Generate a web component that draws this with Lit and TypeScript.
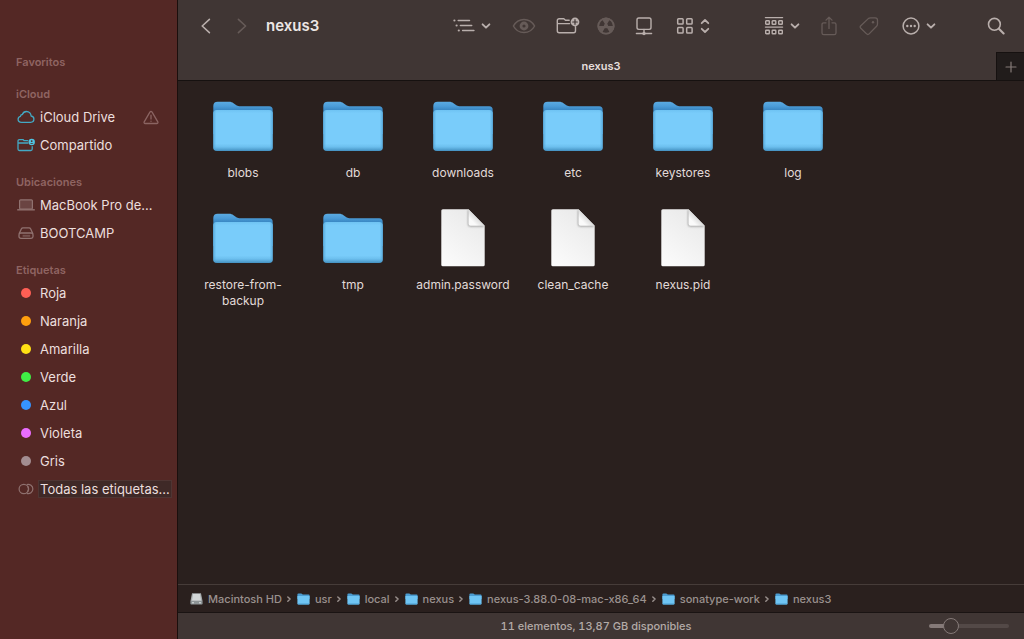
import { LitElement, html, css, nothing } from "lit";
import { customElement, property, state } from "lit/decorators.js";
import { styleMap } from "lit/directives/style-map.js";

const FONT = css`Inter, "Noto Sans", "Liberation Sans", sans-serif`;

const resetButton = css`
  button {
    appearance: none;
    border: 0;
    margin: 0;
    padding: 0;
    background: none;
    color: inherit;
    font: inherit;
  }
`;

/* ---------- glyphs ---------- */

const chevronDown = html`<svg class="glyph" width="10" height="8" viewBox="0 0 10 8" aria-hidden="true">
  <path d="M1.6 2.3 5 5.7l3.4-3.4" stroke-width="1.9" />
</svg>`;

const glyphs = {
  back: html`<svg class="glyph" width="12" height="18" viewBox="0 0 12 18"><path d="M9.4 2.4 2.2 9l7.2 6.6" stroke-width="1.6" /></svg>`,
  forward: html`<svg class="glyph" width="12" height="18" viewBox="0 0 12 18"><path d="M2.4 2.4 9.6 9l-7.2 6.6" stroke-width="1.6" /></svg>`,
  list: html`<svg class="glyph" width="22" height="16" viewBox="0 0 22 16">
    <path d="M5.2 2.5h11.3M7.4 7.5h11.3M9.6 12.500h11.3" stroke-width="1.5" />
    <g class="solid"><circle cx="1.4" cy="2.5" r="1.100" /><circle cx="3.6" cy="7.5" r="1.100" /><circle cx="5.8" cy="12.500" r="1.100" /></g>
  </svg>`,
  eye: html`<svg class="glyph" width="24" height="18" viewBox="0 0 24 18">
    <path d="M1.4 9C3.6 5 7.4 2.4 12 2.4S20.4 5 22.6 9C20.4 13 16.6 15.6 12 15.6S3.6 13 1.4 9Z" stroke-width="1.5" />
    <circle cx="12" cy="9" r="3" stroke-width="2.8" />
  </svg>`,
  newFolder: html`<svg class="glyph" width="24" height="20" viewBox="0 0 24 20">
    <path d="M13.2 4.3H9.5L7.8 2.7H3.2C2 2.7 1.3 3.4 1.3 4.6V14.8C1.3 16 2 16.8 3.2 16.8H17.6C18.8 16.8 19.5 16 19.5 14.8V10.6M1.3 7.6H13.6" stroke-width="1.4" />
    <circle class="solid" cx="19" cy="6" r="4.400" />
    <path class="cut" d="M19 3.7v4.6M16.7 6h4.6" stroke-width="1.2" />
  </svg>`,
  burn: html`<svg class="glyph" width="18" height="18" viewBox="0 0 18 18">
    <circle class="solid" cx="9" cy="9" r="8.6" />
    <g class="cutfill">
      <path d="M7.9 7.1 4.9 1.9A8.2 8.2 0 0 1 13.1 1.9L10.1 7.1A2.2 2.2 0 0 0 7.9 7.1Z" transform="rotate(60 9 9)" />
      <path d="M7.9 7.1 4.9 1.9A8.2 8.2 0 0 1 13.1 1.9L10.1 7.1A2.2 2.2 0 0 0 7.9 7.1Z" transform="rotate(180 9 9)" />
      <path d="M7.9 7.1 4.9 1.9A8.2 8.2 0 0 1 13.1 1.9L10.1 7.1A2.2 2.2 0 0 0 7.9 7.1Z" transform="rotate(300 9 9)" />
    </g>
    <circle class="solid" cx="9" cy="9" r="1.4" />
    <circle cx="9" cy="9" r="7.7" stroke-width="1.7" />
  </svg>`,
  network: html`<svg class="glyph" width="18" height="20" viewBox="0 0 18 20">
    <rect x="2" y="2" width="14" height="11.4" rx="1.8" stroke-width="1.4" />
    <path d="M9 13.4v3.2M1.4 17.5h15.2" stroke-width="1.4" />
    <circle class="solid" cx="9" cy="17.5" r="1.7" />
  </svg>`,
  grid: html`<svg class="glyph" width="18" height="18" viewBox="0 0 18 18">
    <g stroke-width="1.5">
      <rect x="1.7" y="1.7" width="5.4" height="5.4" rx="0.8" /><rect x="10.7" y="1.7" width="5.4" height="5.4" rx="0.8" />
      <rect x="1.7" y="10.6" width="5.4" height="5.4" rx="0.8" /><rect x="10.7" y="10.6" width="5.4" height="5.4" rx="0.8" />
    </g>
  </svg>`,
  upDown: html`<svg class="glyph" width="10" height="16" viewBox="0 0 10 16"><path d="M1.7 5.2 5 2l3.3 3.2M1.7 10.8 5 14l3.3-3.2" stroke-width="1.8" /></svg>`,
  group: html`<svg class="glyph" width="20" height="20" viewBox="0 0 20 20">
    <path d="M1.4 1.6h17.2M1.4 11.1h17.2" stroke-width="1.3" />
    <g stroke-width="1.4">
      <rect x="1.7" y="4.7" width="3.6" height="3.6" rx="0.6" /><rect x="8.2" y="4.7" width="3.6" height="3.6" rx="0.6" /><rect x="14.7" y="4.7" width="3.6" height="3.6" rx="0.6" />
      <rect x="1.7" y="14.2" width="3.6" height="3.6" rx="0.6" /><rect x="8.2" y="14.2" width="3.6" height="3.6" rx="0.6" /><rect x="14.7" y="14.2" width="3.6" height="3.6" rx="0.6" />
    </g>
  </svg>`,
  share: html`<svg class="glyph" width="16" height="20" viewBox="0 0 16 20">
    <path d="M5 6.8H2.8C1.7 6.8 1 7.5 1 8.6V16.9C1 18 1.7 18.7 2.8 18.7H13.2C14.3 18.7 15 18 15 16.9V8.6C15 7.5 14.3 6.8 13.2 6.8H11M8 12.4V1.3M5 4.1 8 1.2l3 2.9" stroke-width="1.3" />
  </svg>`,
  tag: html`<svg class="glyph" width="20" height="20" viewBox="0 0 20 20">
    <path d="M11.6 1.8H16.2C17.7 1.8 18.5 2.6 18.5 4.1V8C18.5 9 18.2 9.7 17.6 10.3L10.1 17.9C9.3 18.7 8.4 18.7 7.6 17.9L1.8 12.2C1 11.4 1 10.5 1.8 9.7L9.3 2.6C10 2 10.7 1.8 11.6 1.8Z" stroke-width="1.3" />
    <circle class="solid" cx="14" cy="6.2" r="1.2" />
  </svg>`,
  more: html`<svg class="glyph" width="18" height="18" viewBox="0 0 18 18">
    <circle cx="9" cy="9" r="7.9" stroke-width="1.5" />
    <g class="solid"><circle cx="5.3" cy="9" r="1.2" /><circle cx="9" cy="9" r="1.2" /><circle cx="12.7" cy="9" r="1.2" /></g>
  </svg>`,
  search: html`<svg class="glyph" width="18" height="18" viewBox="0 0 18 18">
    <circle cx="7.4" cy="7.3" r="5.9" stroke-width="1.6" /><path d="m11.9 11.800 4.700 4.700" stroke-width="2.1" />
  </svg>`,
  plus: html`<svg class="glyph" width="12" height="12" viewBox="0 0 12 12"><path d="M6 1v10M1 6h10" stroke-width="1.2" /></svg>`,
};

const sideIcons: Record<string, unknown> = {
  cloud: html`<svg width="18" height="14" viewBox="0 0 18 14" fill="none" stroke="#43a9c4" stroke-width="1.3" stroke-linejoin="round">
    <path d="M4.6 12.3C2.6 12.3 1.1 11 1.1 9.2C1.1 7.7 2.1 6.600 3.5 6.3C3.5 5.3 4.3 4.6 5.3 4.5C6 2.6 7.6 1.5 9.5 1.5C12 1.5 14 3.5 14.1 6C15.8 6.2 16.9 7.5 16.9 9.1C16.9 11 15.5 12.3 13.6 12.3Z" />
  </svg>`,
  shared: html`<svg width="18" height="14" viewBox="0 0 18 14" fill="none" stroke="#43a9c4" stroke-width="1.3" stroke-linecap="round" stroke-linejoin="round">
    <path d="M10.6 2.7H7.2L6 1.6H2.4C1.5 1.6 1 2.1 1 3V11C1 12 1.5 12.5 2.4 12.5H13.8C14.7 12.5 15.2 12 15.2 11V8.6M1 5H10.8" />
    <circle cx="14.7" cy="4" r="3.2" fill="#4fc4e2" stroke="none" />
    <circle cx="14.7" cy="3.1" r="0.9" fill="#542825" stroke="none" />
    <path d="M13 5.8C13.3 4.6 16.1 4.6 16.4 5.8Z" fill="#542825" stroke="none" />
  </svg>`,
  laptop: html`<svg width="18" height="14" viewBox="0 0 18 14" fill="none" stroke="#907270" stroke-width="1.2">
    <rect x="2.6" y="1.800" width="12.8" height="9.2" rx="1" fill="#6a4442" /><path d="M0.2 11.800h17.6" stroke-width="1.4" />
  </svg>`,
  drive: html`<svg width="18" height="14" viewBox="0 0 18 14" fill="none" stroke="#907270" stroke-width="1.3" stroke-linejoin="round">
    <path d="M2.1 7.8 4.3 3C4.7 2.2 5.2 1.9 6 1.9H12C12.8 1.9 13.3 2.2 13.7 3L15.9 7.8" />
    <rect x="2" y="7" width="14" height="5.4" rx="1.8" /><path d="M5.600 9.8h7.600" stroke-width="2" stroke="#74504e" />
  </svg>`,
  tags: html`<svg width="18" height="14" viewBox="0 0 18 14" fill="none" stroke="#8e706e" stroke-width="1.2">
    <circle cx="6.8" cy="7" r="4.7" /><path d="M9.8 2.500A4.7 4.7 0 1 1 9.8 11.5" />
    <path d="M10.6 4.2A4.7 4.7 0 0 1 10.6 9.8" />
  </svg>`,
};

const warning = html`<svg width="16" height="15" viewBox="0 0 16 15" fill="none" stroke="#8b6462" stroke-width="1.3" stroke-linejoin="round" stroke-linecap="round" role="img" aria-label="Aviso">
  <path d="M8 1.4C8.5 1.4 8.8 1.7 9.1 2.1L14.8 11.8C15.2 12.7 14.8 13.5 13.8 13.5H2.2C1.2 13.5 0.8 12.7 1.2 11.8L6.9 2.1C7.2 1.7 7.5 1.4 8 1.4Z" />
  <path d="M8 5.2v3.8M8 11.1v0.2" />
</svg>`;

const folderIcon = html`<svg width="64" height="64" viewBox="0 0 64 64" aria-hidden="true">
  <defs>
    <linearGradient id="back" x1="0" y1="0" x2="0" y2="1"><stop offset="0" stop-color="#5cabe1" /><stop offset="0.14" stop-color="#4b9cd8" /><stop offset="0.24" stop-color="#3c8ac6" /></linearGradient>
    <linearGradient id="front" x1="0" y1="0" x2="0" y2="1">
      <stop offset="0" stop-color="#6fc3f3" /><stop offset="0.08" stop-color="#79ccfa" /><stop offset="0.82" stop-color="#79ccfa" /><stop offset="0.9" stop-color="#6cbfee" /><stop offset="0.95" stop-color="#58a8d8" /><stop offset="1" stop-color="#4390c0" />
    </linearGradient>
    <linearGradient id="edge"><stop offset="0" stop-color="#4d9fd2" stop-opacity="0.7" /><stop offset="0.05" stop-color="#4d9fd2" stop-opacity="0" /><stop offset="0.95" stop-color="#4d9fd2" stop-opacity="0" /><stop offset="1" stop-color="#4d9fd2" stop-opacity="0.7" /></linearGradient>
  </defs>
  <path fill="url(#back)" d="M2.3 12C2.3 9.2 3.8 7.7 6.6 7.7H18.2C20 7.7 21.2 8.2 22.5 9.2L25 11.1C26 11.9 26.9 12.2 28.3 12.2H58.2C60.5 12.2 61.7 13.4 61.7 15.7V40H2.3Z" />
  <path fill="url(#front)" d="M2.3 19.5C2.3 17.2 3.5 16 5.8 16H58.2C60.5 16 61.7 17.2 61.7 19.5V53.5C61.7 55.8 60.5 57 58.2 57H5.8C3.5 57 2.3 55.8 2.3 53.5Z" />
  <path fill="url(#edge)" d="M2.3 19.5C2.3 17.2 3.5 16 5.8 16H58.2C60.5 16 61.7 17.2 61.7 19.5V53.5C61.7 55.8 60.5 57 58.2 57H5.8C3.5 57 2.3 55.8 2.3 53.5Z" />
</svg>`;

const fileIcon = html`<svg width="64" height="64" viewBox="0 0 64 64" aria-hidden="true">
  <defs>
    <linearGradient id="sheet" x1="0.8" y1="0" x2="0.2" y2="1"><stop offset="0" stop-color="#e8e8e8" /><stop offset="1" stop-color="#fbfbfb" /></linearGradient>
    <linearGradient id="fold" x1="1" y1="0" x2="0" y2="1"><stop offset="0.45" stop-color="#d6d6d6" /><stop offset="0.75" stop-color="#fafafa" /></linearGradient>
    <filter id="soft" x="-40%" y="-40%" width="180%" height="180%"><feGaussianBlur stdDeviation="1" /></filter>
    <clipPath id="page"><path d="M11.8 3.3H37.5L53.7 19.7V58.8Q53.7 60.3 52.2 60.3H11.8Q10.3 60.3 10.3 58.8V4.8Q10.3 3.3 11.8 3.3Z" /></clipPath>
  </defs>
  <g clip-path="url(#page)">
    <rect x="10" y="3" width="44" height="58" fill="url(#sheet)" />
    <path d="M37 3.3V18.3Q37 20.4 39 20.4H53.7Z" fill="#999" filter="url(#soft)" />
  </g>
  <path d="M37.5 3.3V17.7Q37.5 19.7 39.5 19.7H53.7Z" fill="url(#fold)" />
</svg>`;

const miniFolder = html`<svg width="13" height="12" viewBox="0 0 13 12" aria-hidden="true">
  <path fill="#4a9bd0" d="M0.4 1.6Q0.4 0.5 1.5 0.5H4.3L5.8 1.5H11.6Q12.6 1.5 12.6 2.6V6H0.4Z" />
  <path fill="#6fc5f4" d="M0.4 2.9H12.6V10.4Q12.6 11.5 11.5 11.5H1.5Q0.4 11.5 0.4 10.4Z" />
  <path fill="#4b9dcf" d="M0.5 10.6H12.5Q12.3 11.5 11.5 11.5H1.5Q0.7 11.5 0.5 10.6Z" />
</svg>`;

const miniDrive = html`<svg width="13" height="12" viewBox="0 0 13 12" aria-hidden="true">
  <path fill="#a4a9ab" d="M2 0.2H11L12.6 8.5H0.4Z" />
  <path fill="#d3d7d8" d="M3 1H10L11 7.4H2Z" />
  <rect x="0.4" y="8" width="12.2" height="3.6" rx="0.8" fill="#8d9496" />
  <path d="M2 9.8h2M9 9.8h2" stroke="#e8eced" stroke-width="0.9" />
</svg>`;

/* ---------- sidebar ---------- */

interface SideItem { label: string; icon?: string; color?: string; warn?: boolean; boxed?: boolean }

const sections: { title: string; items: SideItem[] }[] = [
  { title: "Favoritos", items: [] },
  { title: "iCloud", items: [{ label: "iCloud Drive", icon: "cloud", warn: true }, { label: "Compartido", icon: "shared" }] },
  { title: "Ubicaciones", items: [{ label: "MacBook Pro de...", icon: "laptop" }, { label: "BOOTCAMP", icon: "drive" }] },
  {
    title: "Etiquetas",
    items: [
      { label: "Roja", color: "#ff5f55" },
      { label: "Naranja", color: "#ff9f0e" },
      { label: "Amarilla", color: "#ffe014" },
      { label: "Verde", color: "#40ef46" },
      { label: "Azul", color: "#3694ff" },
      { label: "Violeta", color: "#ea6dff" },
      { label: "Gris", color: "#a38d91" },
      { label: "Todas las etiquetas...", icon: "tags", boxed: true },
    ],
  },
];

@customElement("finder-sidebar")
class FinderSidebar extends LitElement {
  static styles = css`
    :host {
      display: block;
      box-sizing: border-box;
      padding: 53px 6px 16px 16px;
      background: #542825;
      border-right: 1px solid #1a0f0d;
      color: #ecdfde;
      font: 400 13px/28px ${FONT};
    }
    section + section { margin-top: 14px; }
    h2 { margin: 0; font-size: 11px; font-weight: 600; line-height: 18px; color: #8f6462; }
    ul { list-style: none; margin: 0; padding: 0; }
    .item { display: flex; align-items: center; height: 28px; gap: 4px; color: inherit; text-decoration: none; white-space: nowrap; }
    .mark { flex: none; display: flex; justify-content: center; width: 20px; }
    .mark svg { display: block; }
    .dot { width: 10px; height: 10px; border-radius: 50%; }
    .warn { display: flex; margin-left: auto; padding-right: 12px; }
    .boxed { box-sizing: border-box; margin-left: -2px; padding: 0 1px; line-height: 16px; background: #3f2927; border: 1px solid #4f3533; }
  `;

  render() {
    return html`<nav aria-label="Barra lateral">
      ${sections.map((s) => html`<section>
        <h2>${s.title}</h2>
        ${s.items.length ? html`<ul>${s.items.map((i) => this.item(i))}</ul>` : nothing}
      </section>`)}
    </nav>`;
  }

  private item(i: SideItem) {
    return html`<li><a class="item" href="#">
      <span class="mark">${i.icon ? sideIcons[i.icon] : html`<span class="dot" style=${styleMap({ background: i.color })}></span>`}</span>
      <span class=${i.boxed ? "boxed" : "name"}>${i.label}</span>
      ${i.warn ? html`<span class="warn">${warning}</span>` : nothing}
    </a></li>`;
  }
}

/* ---------- toolbar ---------- */

@customElement("finder-toolbar")
class FinderToolbar extends LitElement {
  @property() folder = "";

  static styles = [resetButton, css`
    :host { display: block; background: #403634; border-bottom: 1px solid #161110; color: #b9afac; font-family: ${FONT}; }
    .glyph { display: block; flex: none; fill: none; stroke: currentColor; stroke-linecap: round; stroke-linejoin: round; }
    .solid { fill: currentColor; stroke: none; }
    .cut { stroke: #403634; }
    .cutfill { fill: #403634; stroke: none; }
    .bar { display: flex; align-items: center; height: 52px; padding: 0 12px 0 10px; }
    .nav { display: flex; }
    .nav button { display: flex; justify-content: center; width: 36px; }
    h1 { margin: 0 auto 0 6px; font-size: 15px; line-height: 20px; font-weight: 600; color: #ece6e4; }
    .tools { display: flex; gap: 8px; }
    .tools + .tools { margin-left: 43px; }
    .tools.find { margin-left: 35px; }
    .tool { display: flex; align-items: center; justify-content: center; gap: 6px; width: 32px; height: 32px; }
    .menu { width: 52px; }
    .compact { width: 46px; }
    .wide { width: 36px; }
    .slim { width: 24px; }
    button:disabled { color: #665b58; }
    .tabs { display: grid; grid-template-columns: 1fr auto 1fr; height: 28px; }
    .tab { grid-column: 2; font-size: 11px; font-weight: 600; line-height: 28px; color: #e6dfdd; }
    .add { box-sizing: border-box; display: flex; align-items: center; justify-content: center; justify-self: end; width: 28px; height: 28px; background: #211c1b; border: solid #161110; border-width: 1px 0 0 1px; color: #857b78; }
  `];

  render() {
    return html`
      <div class="bar">
        <div class="nav">
          <button aria-label="Atrás">${glyphs.back}</button>
          <button aria-label="Adelante" disabled>${glyphs.forward}</button>
        </div>
        <h1>${this.folder}</h1>
        <div class="tools">
          <button class="tool menu" aria-label="Lista">${glyphs.list}${chevronDown}</button>
          <button class="tool wide" aria-label="Vista rápida" disabled>${glyphs.eye}</button>
          <button class="tool wide" aria-label="Nueva carpeta">${glyphs.newFolder}</button>
          <button class="tool slim" aria-label="Grabar" disabled>${glyphs.burn}</button>
          <button class="tool wide" aria-label="Conectar">${glyphs.network}</button>
          <button class="tool compact" aria-label="Iconos">${glyphs.grid}${glyphs.upDown}</button>
        </div>
        <div class="tools">
          <button class="tool compact" aria-label="Agrupar">${glyphs.group}${chevronDown}</button>
          <button class="tool" aria-label="Compartir" disabled>${glyphs.share}</button>
          <button class="tool" aria-label="Etiquetas" disabled>${glyphs.tag}</button>
          <button class="tool menu" aria-label="Acciones">${glyphs.more}${chevronDown}</button>
        </div>
        <div class="tools find"><button class="tool" aria-label="Buscar">${glyphs.search}</button></div>
      </div>
      <div class="tabs">
        <button class="tab">${this.folder}</button>
        <button class="add" aria-label="Nueva pestaña">${glyphs.plus}</button>
      </div>`;
  }
}

/* ---------- icon view ---------- */

const entries: { name: string; file?: boolean }[] = [
  { name: "blobs" }, { name: "db" }, { name: "downloads" }, { name: "etc" }, { name: "keystores" }, { name: "log" },
  { name: "restore-from-backup" }, { name: "tmp" },
  { name: "admin.password", file: true }, { name: "clean_cache", file: true }, { name: "nexus.pid", file: true },
];

@customElement("finder-icons")
class FinderIcons extends LitElement {
  static styles = css`
    :host { display: block; padding: 13px 10px; background: #2a201e; font-family: ${FONT}; overflow: auto; }
    ul { display: grid; grid-template-columns: repeat(6, 110px); grid-auto-rows: minmax(112px, auto); list-style: none; margin: 0; padding: 0; }
    li { display: flex; flex-direction: column; align-items: center; gap: 7px; }
    svg { display: block; }
    .name { max-width: 100px; font-size: 12px; line-height: 16px; text-align: center; color: #e2dbd9; }
  `;
  render() {
    return html`<ul>${entries.map((e) => html`<li>${e.file ? fileIcon : folderIcon}<span class="name">${e.name}</span></li>`)}</ul>`;
  }
}

/* ---------- path and status ---------- */

const path = ["Macintosh HD", "usr", "local", "nexus", "nexus-3.88.0-08-mac-x86_64", "sonatype-work", "nexus3"];

@customElement("finder-footer")
class FinderFooter extends LitElement {
  @state() private size = 22;

  static styles = css`
    :host { display: block; font: 500 11px/14px ${FONT}; color: #9a918e; }
    ol { display: flex; align-items: center; height: 27px; margin: 0; padding: 0 12px; list-style: none; background: #2a201e; border-top: 1px solid #463c39; white-space: nowrap; }
    li { display: flex; align-items: center; }
    a { display: flex; align-items: center; gap: 5px; color: inherit; text-decoration: none; }
    svg { display: block; }
    .sep { margin: 0 5px 0 4px; fill: none; stroke: currentColor; stroke-width: 1.4; stroke-linecap: round; stroke-linejoin: round; }
    .status { display: grid; grid-template-columns: 1fr auto 1fr; align-items: center; height: 26px; padding: 0 15px 0 5px; background: #403634; border-top: 1px solid #1a1413; }
    .count { grid-column: 2; color: #b3aaa7; font-variant-numeric: tabular-nums; }
    input { appearance: none; justify-self: end; width: 80px; height: 16px; margin: 0; background: none; }
    input::-webkit-slider-runnable-track { height: 4px; border-radius: 2px; background: linear-gradient(to right, #857a78 var(--fill), #534947 var(--fill)); }
    input::-webkit-slider-thumb { appearance: none; box-sizing: border-box; width: 16px; height: 16px; margin-top: -6px; border-radius: 50%; background: #403634; border: 1px solid #857a78; }
  `;

  render() {
    return html`
      <nav aria-label="Ruta"><ol>
        ${path.map((p, i) => html`<li>
          ${i ? html`<svg class="sep" width="6" height="8" viewBox="0 0 6 8"><path d="M1.8 1.9 4.1 4.1 1.8 6.3" /></svg>` : nothing}
          <a href="#">${i ? miniFolder : miniDrive}<span>${p}</span></a>
        </li>`)}
      </ol></nav>
      <div class="status">
        <span class="count">11 elementos, 13,87 GB disponibles</span>
        <input type="range" min="0" max="100" aria-label="Tamaño de iconos" .value=${String(this.size)}
          style=${styleMap({ "--fill": `${this.size}%` })}
          @input=${(e: Event) => { this.size = Number((e.target as HTMLInputElement).value); }} />
      </div>`;
  }
}

@customElement("app-root")
class AppRoot extends LitElement {
  static styles = css`
    :host { display: grid; grid-template-columns: 178px minmax(0, 1fr); height: 100vh; overflow: hidden; background: #2a201e; }
    main { display: grid; grid-template-rows: auto minmax(0, 1fr) auto; min-height: 0; }
  `;
  render() {
    return html`<finder-sidebar></finder-sidebar>
      <main>
        <finder-toolbar folder="nexus3"></finder-toolbar>
        <finder-icons></finder-icons>
        <finder-footer></finder-footer>
      </main>`;
  }
}
